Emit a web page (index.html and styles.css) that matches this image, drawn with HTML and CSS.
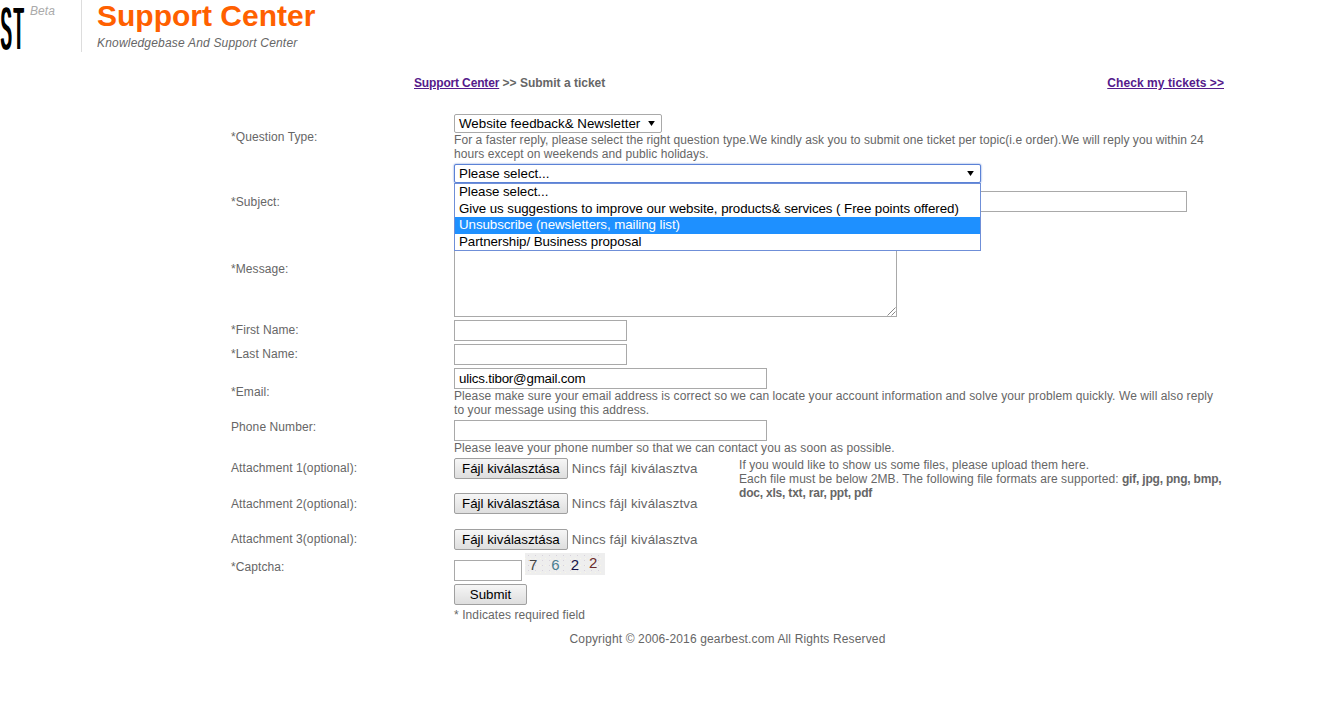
FILE: index.html
```html
<!DOCTYPE html>
<html lang="en">
<head>
  <meta charset="UTF-8" />
  <title>Support Center</title>
  <link rel="stylesheet" href="styles.css">
</head>
<body>

  <!-- Header -->
  <div class="header">
    <div class="logo"><span class="logo-mark">ST</span></div>
    <div class="beta">Beta</div>
    <div class="brand">
      <h1>Support Center</h1>
      <p>Knowledgebase And Support Center</p>
    </div>
  </div>

  <!-- Breadcrumb -->
  <div class="crumbs">
    <div><a class="home" href="#">Support Center</a> &gt;&gt; Submit a ticket</div>
    <a href="#">Check my tickets &gt;&gt;</a>
  </div>

  <!-- Ticket form -->
  <div class="ticket-form">
    <div class="row first">
      <label class="up">*Question Type:</label>
      <div>
        <div class="select type-select">
          <span>Website feedback&amp; Newsletter</span>
          <svg class="arrow" viewBox="0 0 8 6"><path d="M0 0h8L4 6z"/></svg>
        </div>
        <div class="help">For a faster reply, please select the right question type.We kindly ask you to submit one ticket per topic(i.e order).We will reply you within 24 hours except on weekends and public holidays.</div>
      </div>
    </div>

    <div class="row">
      <label></label>
      <div class="dropdown">
        <div class="select open">
          <span>Please select...</span>
          <svg class="arrow" viewBox="0 0 8 6"><path d="M0 0h8L4 6z"/></svg>
        </div>
        <ul class="options">
          <li>Please select...</li>
          <li>Give us suggestions to improve our website, products&amp; services ( Free points offered)</li>
          <li class="active">Unsubscribe (newsletters, mailing list)</li>
          <li>Partnership/ Business proposal</li>
        </ul>
      </div>
    </div>

    <div class="row wide">
      <label>*Subject:</label>
      <div><div class="input subject"></div></div>
    </div>

    <div class="row wide">
      <label>*Message:</label>
      <div>
        <div class="input message">
          <svg class="grip" viewBox="0 0 10 10"><path d="M9.5 1.5l-8 8M9.5 5.5l-4 4" /></svg>
        </div>
      </div>
    </div>

    <div class="row">
      <label class="up">*First Name:</label>
      <div><div class="input name"></div></div>
    </div>

    <div class="row">
      <label class="up">*Last Name:</label>
      <div><div class="input name"></div></div>
    </div>

    <div class="row">
      <label class="up">*Email:</label>
      <div>
        <div class="input email address">ulics.tibor@gmail.com</div>
        <div class="help">Please make sure your email address is correct so we can locate your account information and solve your problem quickly. We will also reply to your message using this address.</div>
      </div>
    </div>

    <div class="row">
      <label class="top">Phone Number:</label>
      <div>
        <div class="input email"></div>
        <div class="help">Please leave your phone number so that we can contact you as soon as possible.</div>
      </div>
    </div>

    <div class="attachments">
      <label class="up">Attachment 1(optional):</label>
      <div class="file"><span class="btn">Fájl kiválasztása</span><span>Nincs fájl kiválasztva</span></div>
      <div class="file-note">
        If you would like to show us some files, please upload them here.<br>
        Each file must be below 2MB. The following file formats are supported: <b>gif, jpg, png, bmp, doc, xls, txt, rar, ppt, pdf</b>
      </div>
      <label>Attachment 2(optional):</label>
      <div class="file"><span class="btn">Fájl kiválasztása</span><span>Nincs fájl kiválasztva</span></div>
      <label class="up">Attachment 3(optional):</label>
      <div class="file"><span class="btn">Fájl kiválasztása</span><span>Nincs fájl kiválasztva</span></div>
    </div>

    <div class="row">
      <label>*Captcha:</label>
      <div class="captcha">
        <div class="input code"></div>
        <div class="captcha-img">
          <span class="d1">7</span><span class="d2">6</span><span class="d3">2</span><span class="d4">2</span>
        </div>
      </div>
    </div>

    <div class="row">
      <label></label>
      <div>
        <span class="btn submit">Submit</span>
        <div class="required">* Indicates required field</div>
      </div>
    </div>

    <div class="copyright">Copyright © 2006-2016 gearbest.com All Rights Reserved</div>
  </div>

</body>
</html>
```

FILE: styles.css
```css
body {
  margin: 0;
  font-family: "Liberation Sans", Arial, sans-serif;
  font-size: 12px;
  line-height: 14px;
  letter-spacing: 0.09px;
  color: #666;
  background-color: white;
}

/* HEADER */
.header {
  display: flex;
  height: 52px;
}

.logo {
  width: 30px;
  height: 52px;
}

/* squeezed narrow, the shadows thicken the upright strokes back up */
.logo-mark {
  display: block;
  width: 30px;
  font-size: 60px;
  line-height: 58px;
  letter-spacing: 8px;
  white-space: nowrap;
  color: #000;
  text-shadow: 3px 0 #000, 6px 0 #000;
  transform: scaleX(0.27);
  transform-origin: 0 0;
}

.beta {
  width: 51px;
  padding-top: 4px;
  font-style: italic;
  color: #aaa;
  box-sizing: border-box;
}

.brand {
  border-left: 1px solid #ddd;
  padding-left: 15px;
}

.brand h1 {
  margin: 0;
  font-size: 30px;
  line-height: 32px;
  letter-spacing: 0;
  color: #ff6000;
}

.brand p {
  margin: 4px 0 0;
  font-style: italic;
  letter-spacing: 0.19px;
}

/* BREADCRUMB */
.crumbs {
  display: flex;
  justify-content: space-between;
  margin: 24px 119px 0 414px;
  font-weight: bold;
  letter-spacing: 0;
}

.crumbs a {
  color: #551a8b;
  letter-spacing: 0.07px;
}

.crumbs a.home {
  letter-spacing: -0.15px;
}

/* FORM */
.ticket-form {
  width: 993px;
  margin: 24px 0 0 231px;
}

.row {
  display: grid;
  grid-template-columns: 223px 1fr;
  align-items: center;
  margin-top: 3px;
}

.row.first {
  margin-top: 0;
}

.row.first .help {
  letter-spacing: 0.07px;
}

.row.wide {
  margin-top: 8px;
}

.row label.top {
  align-self: start;
}

label.up {
  margin-top: -2px;
}

.select {
  display: flex;
  justify-content: space-between;
  align-items: center;
  box-sizing: border-box;
  height: 19px;
  padding: 0 4px;
  border: 1px solid #a9a9a9;
  border-radius: 2px;
  font-size: 13.33px;
  letter-spacing: 0;
  color: #000;
  background-color: white;
}

.type-select {
  width: 208px;
}

.arrow {
  width: 7px;
  height: 5px;
  margin-right: 2px;
}

.dropdown {
  position: relative;
  width: 527px;
  height: 19px;
}

.select.open {
  border: 1px solid #5b82d6;
  box-shadow: 0 0 2px #5b82d6;
}

.options {
  position: absolute;
  top: 19px;
  left: 0;
  right: 0;
  z-index: 2;
  margin: 0;
  padding: 0;
  list-style: none;
  border: 1px solid #6f8fd8;
  background-color: white;
  font-size: 13.33px;
  letter-spacing: -0.07px;
  color: #000;
}

.options li {
  height: 16.5px;
  line-height: 16px;
  padding-left: 4px;
}

.options li.active {
  background-color: #1e90ff;
  color: white;
}

.input {
  box-sizing: border-box;
  height: 21px;
  padding: 0 4px;
  border: 1px solid #a9a9a9;
  font-size: 13.33px;
  line-height: 19px;
  letter-spacing: 0;
  color: #000;
  background-color: white;
}

.address {
  letter-spacing: -0.2px;
}

.subject {
  width: 733px;
}

.message {
  position: relative;
  width: 443px;
  height: 97px;
}

.grip {
  position: absolute;
  right: 0;
  bottom: 0;
  width: 10px;
  height: 10px;
  stroke: #888;
  fill: none;
}

.name {
  width: 173px;
}

.email {
  width: 313px;
}

/* ATTACHMENTS */
.attachments {
  display: grid;
  grid-template-columns: 223px 285px 1fr;
  grid-template-rows: 21px 22px 21px;
  align-items: center;
  row-gap: 14px;
  margin-top: 3px;
}

.file {
  display: flex;
  align-items: center;
  align-self: start;
  gap: 4px;
  font-size: 13.33px;
  letter-spacing: 0.13px;
}

.btn {
  display: inline-block;
  box-sizing: border-box;
  height: 21px;
  padding: 0 7px;
  border: 1px solid #a0a0a0;
  border-radius: 2px;
  font-size: 13.33px;
  line-height: 19px;
  letter-spacing: 0;
  color: #000;
  text-align: center;
  background: linear-gradient(#f6f6f6, #dedede);
}

.file-note {
  grid-row: 1 / span 3;
  grid-column: 3;
  align-self: start;
  letter-spacing: 0.07px;
}

.file-note b {
  letter-spacing: -0.2px;
}

/* CAPTCHA */
.captcha {
  display: flex;
  align-items: flex-end;
  gap: 3px;
}

.code {
  width: 68px;
}

.captcha-img {
  display: flex;
  box-sizing: border-box;
  width: 80px;
  height: 22px;
  margin-bottom: 6px;
  padding: 1px 0 0 4px;
  font-size: 15px;
  line-height: 22px;
  letter-spacing: 0;
  background-color: #eee;
  background-image:
    radial-gradient(circle, #d8d2dc 0.6px, transparent 0.8px),
    radial-gradient(circle, #f8f6e8 0.6px, transparent 0.8px);
  background-size: 7px 5px, 5px 7px;
  background-position: 0 0, 3px 2px;
}

.d1 { color: #444; }
.d2 { color: #4a7f90; margin-left: 14px; }
.d3 { color: #14104a; margin-left: 11px; }
.d4 { color: #6b2b2b; margin-left: 10px; margin-top: -2px; }

.submit {
  display: block;
  width: 73px;
}

.required {
  margin-top: 3px;
}

.copyright {
  margin-top: 10px;
  text-align: center;
  letter-spacing: 0.14px;
}
```
